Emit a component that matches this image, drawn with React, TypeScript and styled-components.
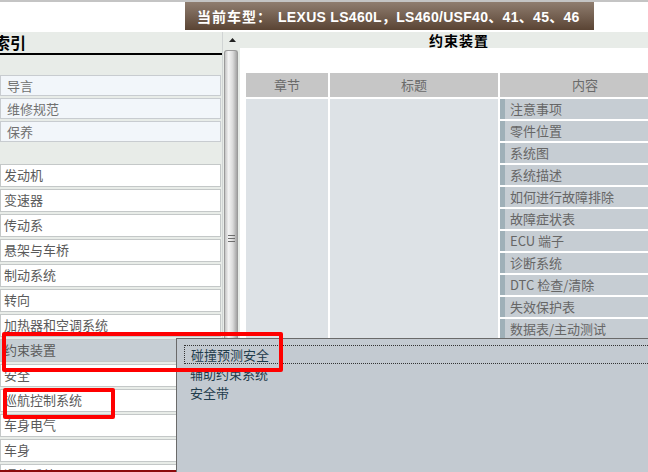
import React from 'react';
import styled, { createGlobalStyle } from 'styled-components';

const GlobalStyle = createGlobalStyle`
  html, body {
    margin: 0;
    padding: 0;
    background: #fff;
  }
  body {
    font-family: "Noto Sans CJK SC", "Liberation Sans", sans-serif;
  }
`;

const Page = styled.div`
  position: relative;
  width: 648px;
  height: 472px;
  overflow: hidden;
  box-sizing: border-box;
  border-top: 2px solid #c4c4c4;
  display: flex;
  flex-direction: column;
`;

const TopBar = styled.div`
  height: 28px;
  display: flex;
  padding-left: 185px;
  margin-bottom: 2px;
  flex-shrink: 0;
`;

const ModelBanner = styled.div`
  width: 409px;
  box-sizing: border-box;
  background: linear-gradient(#8f7d6f, #5a4434);
  color: #fff;
  font-family: "Liberation Sans", "Noto Sans CJK SC", sans-serif;
  font-weight: bold;
  font-size: 14px;
  letter-spacing: 0.3px;
  display: flex;
  align-items: center;
  padding-left: 12px;
  white-space: nowrap;
  overflow: hidden;
`;

const Label = styled.span`
  letter-spacing: 1px;
  margin-right: 6px;
`;

const Main = styled.div`
  flex: 1;
  display: flex;
  min-height: 0;
  overflow: hidden;
`;

const Sidebar = styled.div`
  width: 222px;
  flex-shrink: 0;
  background: #e8ece8;
  display: flex;
  flex-direction: column;
  overflow: hidden;
`;

const SideTitle = styled.div`
  height: 21px;
  line-height: 21px;
  border-bottom: 2px solid #000;
  font-size: 16px;
  font-weight: bold;
  color: #000;
  text-indent: -6px;
  flex-shrink: 0;
`;

const ListArea = styled.div`
  flex: 1;
  min-height: 0;
  overflow: hidden;
  padding-top: 20px;
`;

const Group = styled.div<{ $gap: number }>`
  display: flex;
  flex-direction: column;
  gap: 2px;
  margin-bottom: ${p => p.$gap}px;
`;

const IntroItem = styled.div`
  width: 221px;
  box-sizing: border-box;
  height: 21px;
  line-height: 19px;
  border: 1px solid #c8ccd0;
  background: #f2f6fa;
  padding-left: 6px;
  font-size: 13px;
  color: #707070;
`;

const SystemItem = styled.div<{ $active?: boolean }>`
  width: 221px;
  box-sizing: border-box;
  height: 23px;
  line-height: 19px;
  border: 1px solid #c4c8c8;
  background: ${p => (p.$active ? '#c6ced4' : '#fff')};
  padding-left: 3px;
  font-size: 13px;
  color: #5a5a5a;
  white-space: nowrap;
  overflow: hidden;
`;

const RedBar = styled.div`
  height: 2px;
  background: #8b0a0a;
  flex-shrink: 0;
`;

const ScrollCol = styled.div`
  width: 18px;
  flex-shrink: 0;
  box-sizing: border-box;
  background: #e8ece8;
  border-left: 1px solid #d0d4d4;
  padding-left: 1px;
  display: flex;
  flex-direction: column;
`;

const ScrollUp = styled.div`
  height: 16px;
  display: flex;
  align-items: center;
  justify-content: center;
  flex-shrink: 0;
`;

const ScrollThumb = styled.div`
  flex: 1;
  margin: 2px 2px 0 0;
  border: 1px solid #9a9a9a;
  border-bottom: none;
  border-radius: 3px 3px 0 0;
  background: linear-gradient(to right, #c4c4c4, #f4f4f4 30%, #dadada 65%, #a4a4a4);
  padding-top: 184px;
  display: flex;
  justify-content: center;
`;

const Grip = styled.div`
  width: 7px;
  height: 8px;
  background: repeating-linear-gradient(#6e6e6e 0 1px, transparent 1px 3px);
`;

const Content = styled.div`
  width: 438px;
  flex-shrink: 0;
  display: flex;
  flex-direction: column;
`;

const ContentTitle = styled.div`
  height: 16px;
  line-height: 16px;
  background: #e8ece8;
  text-align: center;
  font-size: 14px;
  font-weight: bold;
  letter-spacing: 1px;
  color: #000;
  flex-shrink: 0;
`;

const Table = styled.div`
  flex: 1;
  margin-top: 25px;
  padding-left: 6px;
  display: grid;
  grid-template-columns: 82px 168px 170px;
  grid-template-rows: 24px 1fr;
  column-gap: 2px;
  row-gap: 2px;
`;

const HeadCell = styled.div`
  background: #c6c6c6;
  color: #6a6a6a;
  font-size: 13px;
  line-height: 24px;
  text-align: center;
`;

const BodyCell = styled.div`
  background: #dde2e6;
`;

const ItemList = styled.div`
  display: flex;
  flex-direction: column;
  gap: 2px;
`;

const ContentItem = styled.div`
  height: 20px;
  line-height: 20px;
  background: #c6cdd3;
  border-left: 5px solid #9fb0b8;
  padding-left: 5px;
  font-size: 13px;
  color: #666;
  white-space: nowrap;
`;

const PopupMenu = styled.div`
  position: absolute;
  left: 176px;
  top: 336px;
  right: 0;
  bottom: 0;
  background: #c3cad1;
  border-top: 1px solid #6a6a6a;
  border-left: 1px solid #6a6a6a;
  padding: 6px 0 0 7px;
`;

const MenuItem = styled.div<{ $focused?: boolean }>`
  height: 19px;
  line-height: ${p => (p.$focused ? 17 : 19)}px;
  padding-left: 6px;
  font-size: 13px;
  color: #1f3c4c;
  border: ${p => (p.$focused ? '1px dotted #333' : 'none')};
  border-right: none;
  box-sizing: border-box;
`;

const Highlight = styled.div<{ $x: number; $y: number; $w: number; $h: number }>`
  position: absolute;
  left: ${p => p.$x}px;
  top: ${p => p.$y}px;
  width: ${p => p.$w}px;
  height: ${p => p.$h}px;
  box-sizing: border-box;
  border: 4px solid #ff0000;
  border-radius: 2px;
  pointer-events: none;
`;

const intro = ['导言', '维修规范', '保养'];
const systems = [
  '发动机', '变速器', '传动系', '悬架与车桥', '制动系统', '转向',
  '加热器和空调系统', '约束装置', '安全', '巡航控制系统', '车身电气', '车身', '通信系统',
];
const contents = [
  '注意事项', '零件位置', '系统图', '系统描述', '如何进行故障排除', '故障症状表',
  'ECU 端子', '诊断系统', 'DTC 检查/清除', '失效保护表', '数据表/主动测试',
];
const submenu = ['碰撞预测安全', '辅助约束系统', '安全带'];

const App: React.FC = () => (
  <>
    <GlobalStyle />
    <Page>
      <TopBar>
        <ModelBanner>
          <Label>当前车型：</Label>LEXUS LS460L，LS460/USF40、41、45、46
        </ModelBanner>
      </TopBar>
      <Main>
        <Sidebar>
          <SideTitle>索引</SideTitle>
          <ListArea>
            <Group $gap={22}>
              {intro.map(t => <IntroItem key={t}>{t}</IntroItem>)}
            </Group>
            <Group $gap={0}>
              {systems.map(t => (
                <SystemItem key={t} $active={t === '约束装置'}>{t}</SystemItem>
              ))}
            </Group>
          </ListArea>
          <RedBar />
        </Sidebar>
        <ScrollCol>
          <ScrollUp>
            <svg width="7" height="4" viewBox="0 0 7 4">
              <path d="M0 4 L3.5 0 L7 4 Z" fill="#222" />
            </svg>
          </ScrollUp>
          <ScrollThumb>
            <Grip />
          </ScrollThumb>
        </ScrollCol>
        <Content>
          <ContentTitle>约束装置</ContentTitle>
          <Table>
            <HeadCell>章节</HeadCell>
            <HeadCell>标题</HeadCell>
            <HeadCell>内容</HeadCell>
            <BodyCell />
            <BodyCell />
            <ItemList>
              {contents.map(t => <ContentItem key={t}>{t}</ContentItem>)}
            </ItemList>
          </Table>
        </Content>
      </Main>
      <PopupMenu>
        {submenu.map((t, i) => (
          <MenuItem key={t} $focused={i === 0}>{t}</MenuItem>
        ))}
      </PopupMenu>
      <Highlight $x={2} $y={330} $w={281} $h={40} />
      <Highlight $x={3} $y={386} $w={112} $h={31} />
    </Page>
  </>
);

export default App;
